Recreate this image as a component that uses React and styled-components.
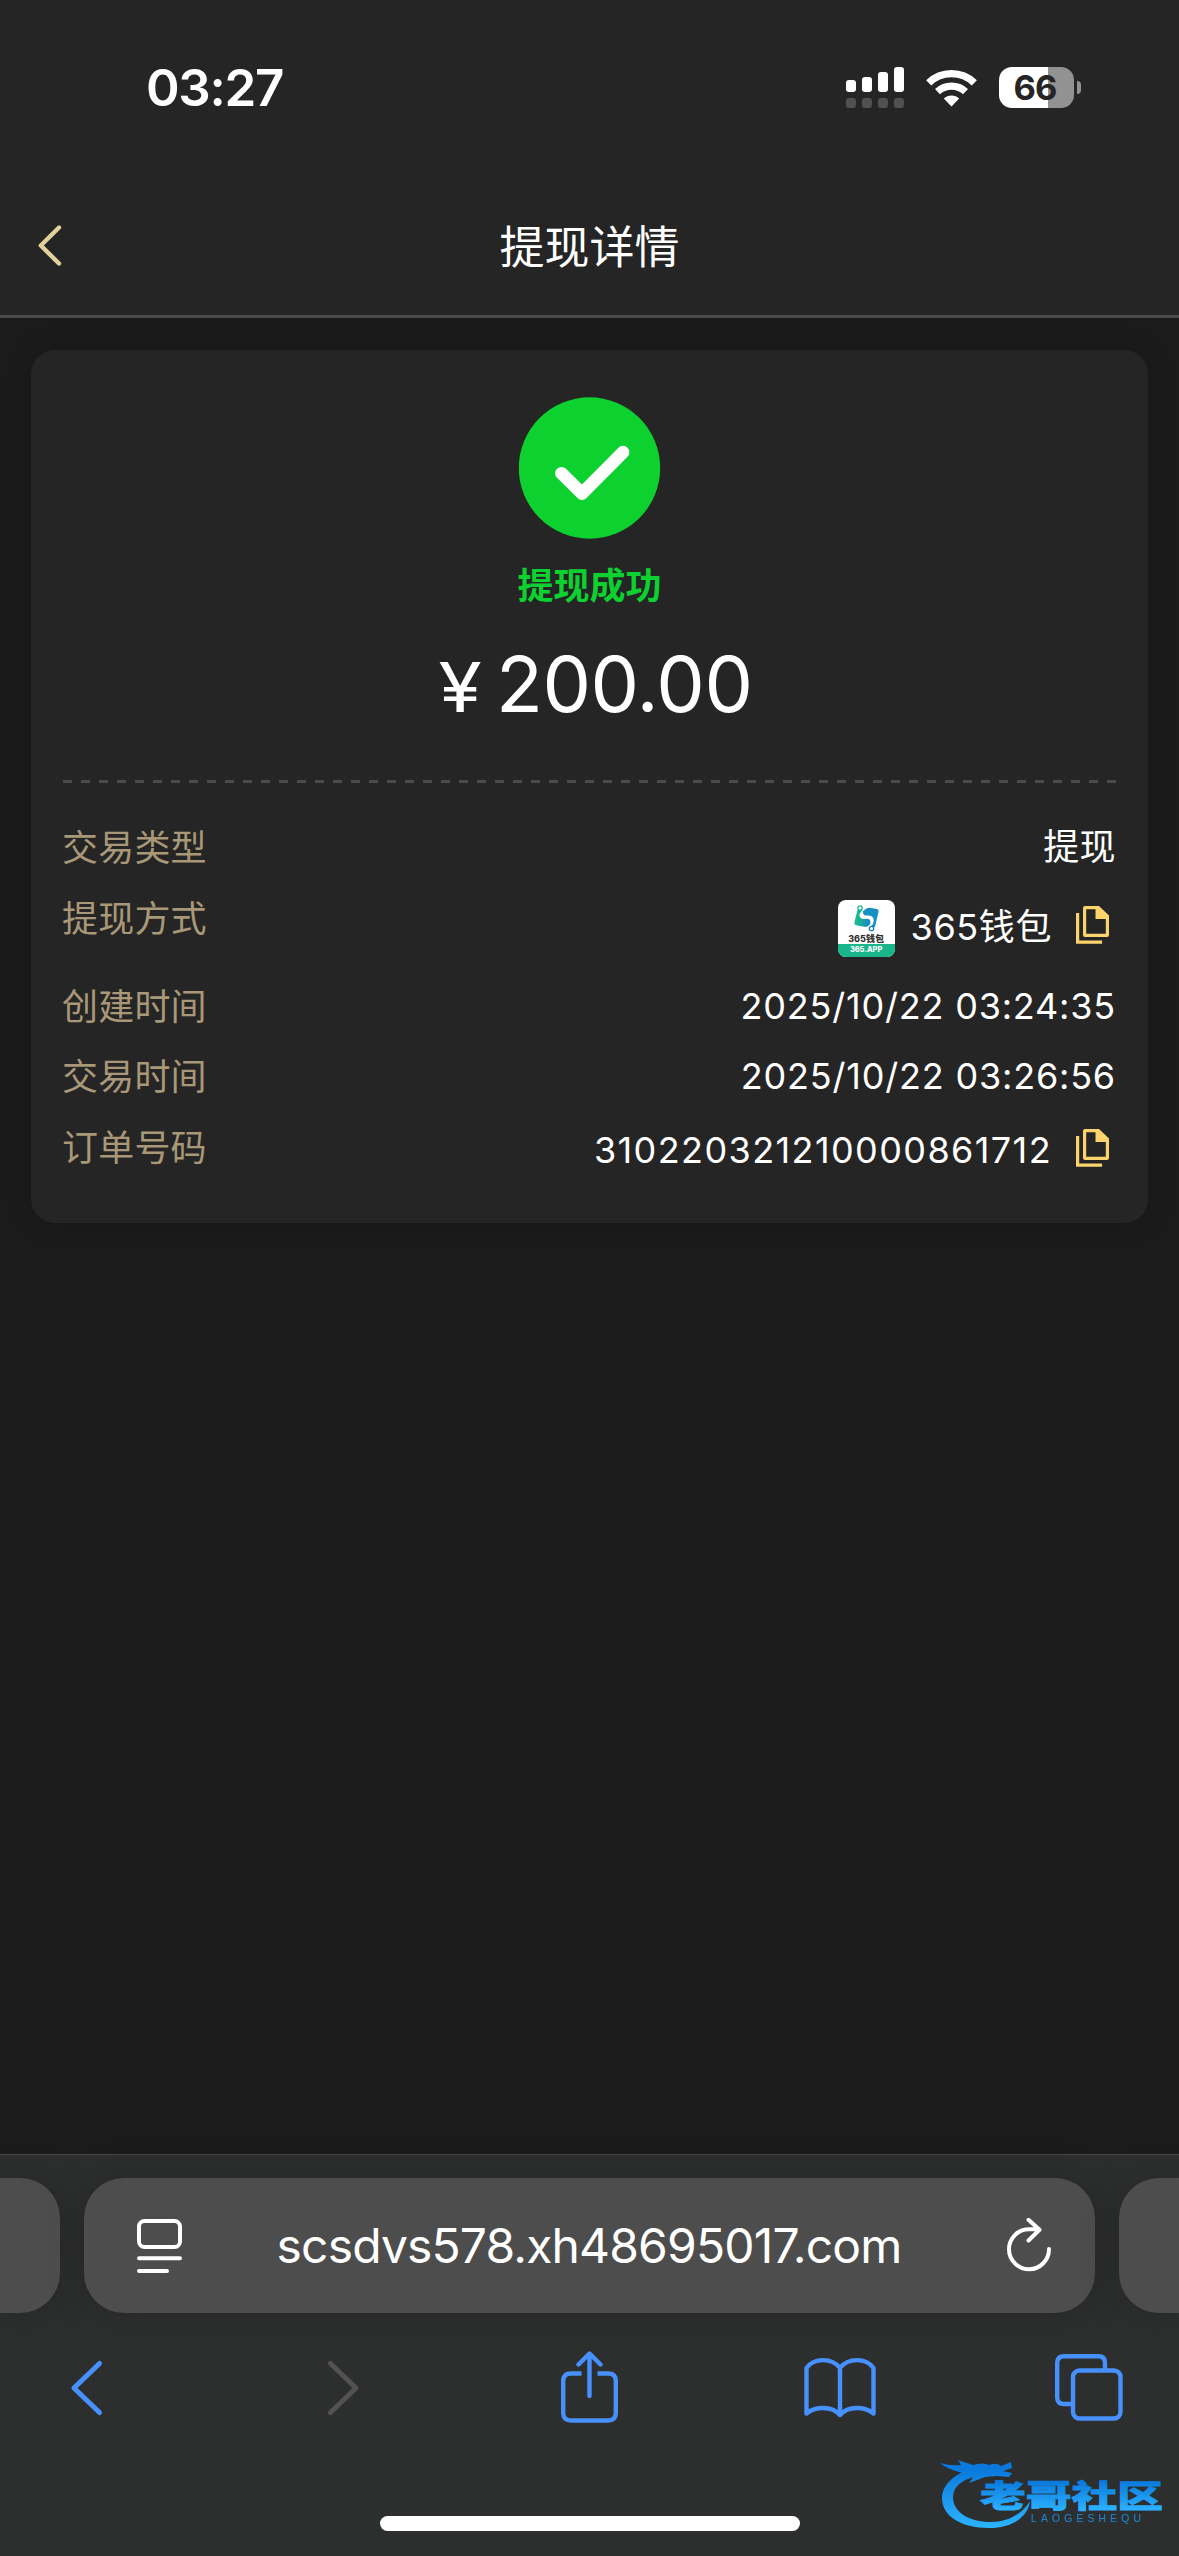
import React from 'react';
import styled, { createGlobalStyle } from 'styled-components';

const GlobalStyle = createGlobalStyle`
* {
  box-sizing: border-box;
}
body {
  margin: 0;
  background: #1b1b1b;
}
svg {
  display: block;
  flex: none;
}
p {
  margin: 0;
}
`
const Screen = styled.div`
width: 1179px;
height: 2556px;
display: flex;
flex-direction: column;
overflow: hidden;
background: #1b1b1b;
color: #ffffff;
font-family: Inter, 'Noto Sans CJK SC', sans-serif;
`
const TopArea = styled.header`
height: 318px;
background: #252525;
border-bottom: 3px solid #4a4a4a;
`
const StatusBar = styled.div`
height: 175px;
padding: 0 98px 0 146px;
display: flex;
align-items: center;
justify-content: space-between;
`
const Clock = styled.p`
padding-top: 1px;
font-size: 51px;
font-weight: 600;
line-height: 60px;
letter-spacing: -1.3px;
`
const StatusIcons = styled.div`
display: flex;
align-items: center;
gap: 22px;
`
const Battery = styled.div`
display: flex;
align-items: center;
gap: 3px;
`
const BatteryBody = styled.div`
width: 75px;
height: 41px;
padding-right: 3px;
border-radius: 13px;
background: linear-gradient(90deg, #ffffff ${({ level }) => level}%, #929292 ${({ level }) => level}%);
color: #252525;
font-size: 34.5px;
font-weight: 700;
line-height: 41px;
letter-spacing: -0.8px;
text-align: center;
`
const BatteryCap = styled.div`
width: 4px;
height: 13px;
border-radius: 0 4px 4px 0;
background: #929292;
`
const TitleBar = styled.div`
height: 140px;
padding: 0 38px;
display: grid;
grid-template-columns: 60px 1fr 60px;
align-items: center;
`
const Title = styled.h1`
margin: 0;
font-family: 'Noto Sans CJK SC', sans-serif;
font-size: 45px;
font-weight: 400;
line-height: 60px;
text-align: center;
`
const Main = styled.main`
flex: 1;
padding: 32px 31px 0;
`
const Card = styled.section`
height: 873px;
padding: 47px 32px 0;
border-radius: 24px;
background: #252525;
box-shadow: 0 0 30px rgba(0, 0, 0, 0.14);
`
const Result = styled.div`
height: 383px;
display: flex;
flex-direction: column;
align-items: center;
`
const ResultText = styled.p`
margin-top: 17px;
font-family: 'Noto Sans CJK SC', sans-serif;
font-size: 36px;
font-weight: 700;
line-height: 54px;
color: #0cd12f;
`
const Amount = styled.p`
margin-top: 27px;
padding-left: 14px;
display: flex;
align-items: baseline;
gap: 18px;
font-size: 77px;
font-weight: 400;
line-height: 94px;
letter-spacing: -0.5px;
`
const Currency = styled.span`
display: inline-block;
font-size: 69px;
transform: scaleX(1.14);
`
const Divider = styled.div`
height: 3px;
background: repeating-linear-gradient(90deg, #4b4b4b 0 9px, transparent 9px 18px);
`
const Details = styled.dl`
margin: 0;
padding-top: 37px;
`
const Row = styled.div`
height: ${({ tall }) => (tall ? '88px' : '70.5px')};
display: flex;
align-items: flex-start;
justify-content: space-between;
`
const Label = styled.dt`
margin: -2px 0 0 -1px;
font-family: 'Noto Sans CJK SC', sans-serif;
font-size: 36px;
font-weight: 400;
line-height: 54px;
letter-spacing: 0.2px;
color: #a89878;
`
const Value = styled.dd`
margin: 0;
padding-top: ${({ drop }) => drop || 0}px;
display: flex;
align-items: center;
font-size: 36px;
line-height: 54px;
letter-spacing: ${({ track }) => track || 0}px;
`
const CopyButton = styled.button`
margin: -4px 7px 0 24px;
padding: 0;
border: none;
background: none;
`
const WalletLogo = styled.div`
width: 57px;
height: 57px;
margin: 3px 16px 0 0;
border-radius: 8px;
overflow: hidden;
background: #ffffff;
display: flex;
flex-direction: column;
align-items: center;
letter-spacing: 0;
`
const WalletName = styled.span`
margin-top: 1px;
color: #333333;
font-size: 9px;
font-weight: 800;
line-height: 11px;
white-space: nowrap;
`
const WalletSite = styled.span`
width: 100%;
margin-top: auto;
height: 14px;
background: #1ab68b;
color: #ffffff;
font-size: 7.4px;
font-weight: 800;
line-height: 11px;
text-align: center;
`
const BrowserBar = styled.footer`
height: 402px;
border-top: 1px solid #464646;
background: #2d2e2e;
`
const AddressStrip = styled.div`
padding-top: 23px;
display: flex;
justify-content: space-between;
`
const SideTab = styled.div`
width: 60px;
height: 135px;
border-radius: ${({ side }) => (side === 'left' ? '0 40px 40px 0' : '40px 0 0 40px')};
background: #4c4d4c;
box-shadow: 0 0 40px rgba(0, 0, 0, 0.18);
`
const AddressField = styled.div`
width: 1011px;
height: 135px;
padding: 0 43px 0 53px;
border-radius: 40px;
background: #4c4d4c;
box-shadow: 0 0 40px rgba(0, 0, 0, 0.18);
display: flex;
align-items: center;
justify-content: space-between;
`
const Url = styled.p`
margin-right: 11px;
padding-top: 1px;
font-size: 48px;
line-height: 60px;
letter-spacing: -0.85px;
`
const Toolbar = styled.nav`
height: 149px;
padding-left: 69px;
display: grid;
grid-template-columns: 257px 235px 243px 251px 68px;
align-items: center;
`
const BottomEdge = styled.div`
position: relative;
padding-top: 54px;
display: flex;
justify-content: center;
`
const HomeIndicator = styled.div`
width: 420px;
height: 15px;
border-radius: 8px;
background: #ffffff;
`
// the community badge floats over the browser chrome
const Watermark = styled.div`
position: absolute;
right: 14px;
top: -8px;
`

const BackIcon = () => (
    <svg width="26" height="42" viewBox="0 0 26 42" fill="none">
        <path d="M21 3.5 L2.8 21.5 L21 39.5" stroke="#e2d09b" strokeWidth="4.4" strokeLinecap="round" strokeLinejoin="round" />
    </svg>
)

const SignalIcon = () => (
    <svg width="58" height="41" viewBox="0 0 58 41">
        {[12, 15, 20, 25].map((h, i) => (
            <g key={h}>
                <rect x={i * 16} y={25 - h} width="10" height={h} rx="3" fill="#fff" />
                <rect x={i * 16} y="31" width="10" height="10" rx="3" fill="#515151" />
            </g>
        ))}
    </svg>
)

const WifiIcon = () => (
    <svg width="51" height="38" viewBox="0 0 51 38" fill="none">
        <path d="M2.7 13.8 A33 33 0 0 1 48.3 13.8" stroke="#fff" strokeWidth="7.4" />
        <path d="M11.5 22.6 A20.5 20.5 0 0 1 39.5 22.6" stroke="#fff" strokeWidth="7.2" />
        <path d="M25.5 37.5 L17.8 29.6 A11 11 0 0 1 33.2 29.6 Z" fill="#fff" />
    </svg>
)

const SuccessIcon = () => (
    <svg width="142" height="142" viewBox="0 0 142 142" fill="none">
        <circle cx="70.5" cy="71" r="70.7" fill="#0cd12f" />
        <path d="M42.5 76.3 L63 96.5 L104 55.2" stroke="#fff" strokeWidth="12.8" strokeLinecap="round" strokeLinejoin="round" />
    </svg>
)

const CopyIcon = () => (
    <svg width="33" height="38" viewBox="0 0 33 38" fill="none">
        <path d="M1.6 8.5 V36.2 H24.5" stroke="#fbd46d" strokeWidth="3.2" strokeLinecap="square" />
        <path fillRule="evenodd" fill="#fbd46d" d="M9 0 H23 L33 9.5 V29 Q33 31 31 31 H9 Q7 31 7 29 V2 Q7 0 9 0 Z M10.2 3.2 V27.8 H29.8 V13 H19.5 V3.2 Z" />
    </svg>
)

const WalletMark = () => (
    <svg width="27" height="32" viewBox="0 -5 27 32" fill="none">
        <defs>
            <linearGradient id="wallet" x1="0" y1="0" x2="1" y2="0">
                <stop offset="0.2" stopColor="#1bb98c" />
                <stop offset="1" stopColor="#1483cc" />
            </linearGradient>
        </defs>
        <path d="M5 3 L1.5 17 Q1 20 4 20.5 L13 22 Q19 20 17 15 Q15 13 11 14 Q6 14 6.5 9 Q8 7 9.5 5 Z" fill="url(#wallet)" />
        <path d="M10 6 Q15 1.5 18 3 L24 4 Q26 4.5 25.5 7 L22 22 L18 22 Q23 15 19 11.5 Q17 10 13.5 10.5 Q9.5 10.5 10 6 Z" fill="#1691c2" />
        <circle cx="7" cy="3" r="2.2" fill="#fff" stroke="#1bb98c" strokeWidth="1.3" />
        <circle cx="18.5" cy="23.5" r="2.2" fill="#fff" stroke="#1483cc" strokeWidth="1.3" />
    </svg>
)

const PageIcon = () => (
    <svg width="45" height="55" viewBox="0 0 45 55" fill="none" stroke="#fff" strokeWidth="4" strokeLinecap="round">
        <rect x="2" y="3" width="41" height="26" rx="5.5" />
        <path d="M2 40.2 H43 M2 53 H30" />
    </svg>
)

const ReloadIcon = () => (
    <svg width="45" height="55" viewBox="0 0 45 55" fill="none" stroke="#fff" strokeWidth="4" strokeLinecap="round" strokeLinejoin="round">
        <path d="M42 31 A20 20 0 1 1 22 11.2 H32 M21.5 1.8 L32.5 11.8 L21.5 22.5" />
    </svg>
)

const Chevron = ({ flip, color }) => (
    <svg width="35" height="58" viewBox="0 0 35 58" fill="none">
        <path d={flip ? 'M4.5 4.5 L30 29 L4.5 53.5' : 'M30.5 4.5 L5 29 L30.5 53.5'} stroke={color} strokeWidth="5" strokeLinecap="round" strokeLinejoin="round" />
    </svg>
)

const ShareIcon = () => (
    <svg width="57" height="74" viewBox="0 0 57 74" fill="none" stroke="#4791ff" strokeWidth="4.4" strokeLinejoin="round">
        <path d="M20.5 22.5 H10 Q2.2 22.5 2.2 30 V62 Q2.2 69.5 10 69.5 H47 Q54.8 69.5 54.8 62 V30 Q54.8 22.5 47 22.5 H36.5" />
        <path d="M28.5 45 V3 M17.5 13.5 L28.5 2.5 L39.5 13.5" strokeLinecap="round" />
    </svg>
)

const BookIcon = () => (
    <svg width="72" height="62" viewBox="0 0 72 62" fill="none" stroke="#4791ff" strokeWidth="4.4" strokeLinejoin="round">
        <path d="M36 11 C28 0.5 10 0.5 2.5 11 V56.5 C11 49.5 28 48.5 36 58 C44 48.5 61 49.5 69.5 56.5 V11 C62 0.5 44 0.5 36 11 V58" />
    </svg>
)

const TabsIcon = () => (
    <svg width="68" height="67" viewBox="0 0 68 67" fill="none" stroke="#4791ff" strokeWidth="4.4">
        <path d="M50 15 V9 Q50 2.2 43.5 2.2 H9 Q2.2 2.2 2.2 9 V43.5 Q2.2 50 9 50 H16" />
        <rect x="18" y="16.5" width="47.5" height="48" rx="6.5" />
    </svg>
)

const DragonBadge = () => (
    <svg width="226" height="80" viewBox="0 0 226 80">
        <defs>
            <linearGradient id="badge" gradientUnits="userSpaceOnUse" x1="0" y1="14" x2="0" y2="74">
                <stop offset="0" stopColor="#0a78dc" />
                <stop offset="1" stopColor="#2bb4ff" />
            </linearGradient>
            <linearGradient id="badgeText" gradientUnits="userSpaceOnUse" x1="0" y1="26" x2="0" y2="56">
                <stop offset="0" stopColor="#0877db" />
                <stop offset="1" stopColor="#2bb1ff" />
            </linearGradient>
        </defs>
        <path d="M32 15 C14 20 3 32 3 44 C3 62 22 74 50 74 C72 74 89 64 91 47 C83 60 69 68 52 68 C30 68 14 58 14 43 C14 33 22 26 38 22 Z" fill="url(#badge)" />
        <path d="M1 9 Q12 12 22 11 L19 6 Q28 9 34 11 Q44 8 50 11 Q58 8 62 12 L72 8 L73 14 L64 17 L73 19 L70 23 L58 22 L46 23 L30 29 L35 22 L20 18 Q8 15 1 9 Z" fill="url(#badge)" />
        <text x="41" y="53" fontFamily="'Noto Sans CJK SC', sans-serif" fontSize="31" fontWeight="900" textLength="183" lengthAdjust="spacingAndGlyphs" fill="url(#badgeText)" stroke="url(#badgeText)" strokeWidth="0.8">老哥社区</text>
        <text x="92" y="68" fontFamily="'Liberation Sans', sans-serif" fontSize="10.5" textLength="110" fill="#1c86cf">LAOGESHEQU</text>
    </svg>
)

const App = () => {
    return (
        <Screen>
            <GlobalStyle />
            <TopArea>
                <StatusBar>
                    <Clock>03:27</Clock>
                    <StatusIcons>
                        <SignalIcon />
                        <WifiIcon />
                        <Battery>
                            <BatteryBody level={66}>66</BatteryBody>
                            <BatteryCap />
                        </Battery>
                    </StatusIcons>
                </StatusBar>
                <TitleBar>
                    <BackIcon />
                    <Title>提现详情</Title>
                </TitleBar>
            </TopArea>
            <Main>
                <Card>
                    <Result>
                        <SuccessIcon />
                        <ResultText>提现成功</ResultText>
                        <Amount><Currency>¥</Currency>200.00</Amount>
                    </Result>
                    <Divider />
                    <Details>
                        <Row>
                            <Label>交易类型</Label>
                            <Value track={0.4}>提现</Value>
                        </Row>
                        <Row tall>
                            <Label>提现方式</Label>
                            <Value drop={6} track={0.6}>
                                <WalletLogo>
                                    <WalletMark />
                                    <WalletName>365钱包</WalletName>
                                    <WalletSite>365.APP</WalletSite>
                                </WalletLogo>
                                365钱包
                                <CopyButton><CopyIcon /></CopyButton>
                            </Value>
                        </Row>
                        <Row>
                            <Label>创建时间</Label>
                            <Value track={0.8}>2025/10/22 03:24:35</Value>
                        </Row>
                        <Row>
                            <Label>交易时间</Label>
                            <Value track={0.8}>2025/10/22 03:26:56</Value>
                        </Row>
                        <Row>
                            <Label>订单号码</Label>
                            <Value drop={3} track={1.4}>
                                310220321210000861712
                                <CopyButton><CopyIcon /></CopyButton>
                            </Value>
                        </Row>
                    </Details>
                </Card>
            </Main>
            <BrowserBar>
                <AddressStrip>
                    <SideTab side="left" />
                    <AddressField>
                        <PageIcon />
                        <Url>scsdvs578.xh48695017.com</Url>
                        <ReloadIcon />
                    </AddressField>
                    <SideTab side="right" />
                </AddressStrip>
                <Toolbar>
                    <Chevron color="#4791ff" />
                    <Chevron flip color="#525252" />
                    <ShareIcon />
                    <BookIcon />
                    <TabsIcon />
                </Toolbar>
                <BottomEdge>
                    <HomeIndicator />
                    <Watermark><DragonBadge /></Watermark>
                </BottomEdge>
            </BrowserBar>
        </Screen>
    )
}
export default App
